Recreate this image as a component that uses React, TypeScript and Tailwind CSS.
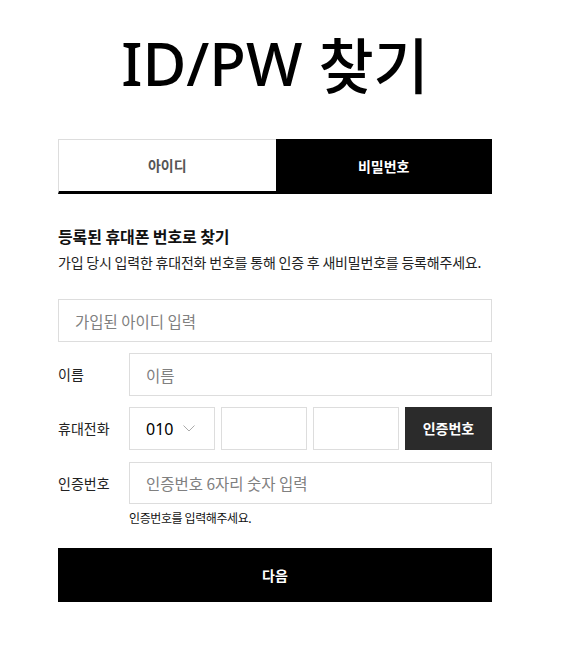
import React from "react";

const kr = { fontFamily: '"Noto Sans CJK KR", "Noto Sans", sans-serif' };

export default function App() {
  return (
    <div className="min-h-[659px] bg-white" style={kr}>
      <div className="ml-[58px] w-[434px] pt-[26px]">
        <h1
          className="flex h-[74px] items-center justify-center text-[60px] leading-[74px] font-medium text-black"
          style={{ fontFamily: '"Noto Sans", "Noto Sans CJK KR", sans-serif' }}
        >
          <span className="leading-[74px]">ID/PW</span>
          <span className="ml-[16px] leading-[74px]" style={kr}>찾기</span>
        </h1>

        <div className="mt-[39px] flex h-[55px]">
          <button className="flex-1 flex items-center justify-center border-t border-l border-[#ddd] border-b-[3px] border-b-black text-[14px] font-bold text-[#555] bg-white">
            아이디
          </button>
          <button className="flex-1 flex items-center justify-center bg-black text-[14px] font-bold text-white">
            비밀번호
          </button>
        </div>

        <div className="mt-[32px]">
          <h2 className="text-[16px] leading-[20px] font-bold text-[#111] tracking-[-0.1px]">
            등록된 휴대폰 번호로 찾기
          </h2>
          <p className="mt-[7px] text-[14px] leading-[18px] text-[#222] tracking-[-0.2px]">
            가입 당시 입력한 휴대전화 번호를 통해 인증 후 새비밀번호를 등록해주세요.
          </p>
        </div>

        <div className="mt-[28px] flex flex-col">
          <input
            className="h-[43px] w-full border border-[#ddd] px-[16px] text-[15.5px] outline-none placeholder:text-[#808080]"
            placeholder="가입된 아이디 입력"
          />
          <div className="mt-[11px] flex items-center">
            <label className="w-[71px] shrink-0 text-[14px] text-[#222]">이름</label>
            <input
              className="h-[43px] flex-1 border border-[#ddd] px-[16px] text-[15.5px] outline-none placeholder:text-[#808080]"
              placeholder="이름"
            />
          </div>
          <div className="mt-[11px] flex items-center">
            <label className="w-[71px] shrink-0 text-[14px] text-[#222]">휴대전화</label>
            <div className="flex flex-1 gap-[6px]">
              <div className="relative flex h-[43px] w-[86px] items-center border border-[#ddd] pl-[16px]">
                <span className="text-[16px] text-black" style={{ fontFamily: '"Noto Sans", sans-serif' }}>010</span>
                <svg className="absolute right-[19px] top-[17px]" width="12" height="7" viewBox="0 0 12 7" fill="none">
                  <path d="M0.5 0.5 L6 6 L11.5 0.5" stroke="#aaa" strokeWidth="1" />
                </svg>
              </div>
              <input className="h-[43px] w-[86px] border border-[#ddd] outline-none" />
              <input className="h-[43px] w-[86px] border border-[#ddd] outline-none" />
              <button className="h-[43px] w-[87px] bg-[#2b2b2b] text-[14px] font-bold text-white">
                인증번호
              </button>
            </div>
          </div>
          <div className="mt-[12px] flex items-center">
            <label className="w-[71px] shrink-0 text-[14px] text-[#222]">인증번호</label>
            <input
              className="h-[42px] flex-1 border border-[#ddd] px-[16px] text-[15.5px] outline-none placeholder:text-[#808080]"
              placeholder="인증번호 6자리 숫자 입력"
            />
          </div>
          <p className="ml-[71px] mt-[6px] text-[12px] leading-[16px] text-[#111] tracking-[-0.4px]">
            인증번호를 입력해주세요.
          </p>
        </div>

        <button className="mt-[22px] h-[54px] w-full bg-black text-[14px] font-bold text-white">
          다음
        </button>
      </div>
    </div>
  );
}
